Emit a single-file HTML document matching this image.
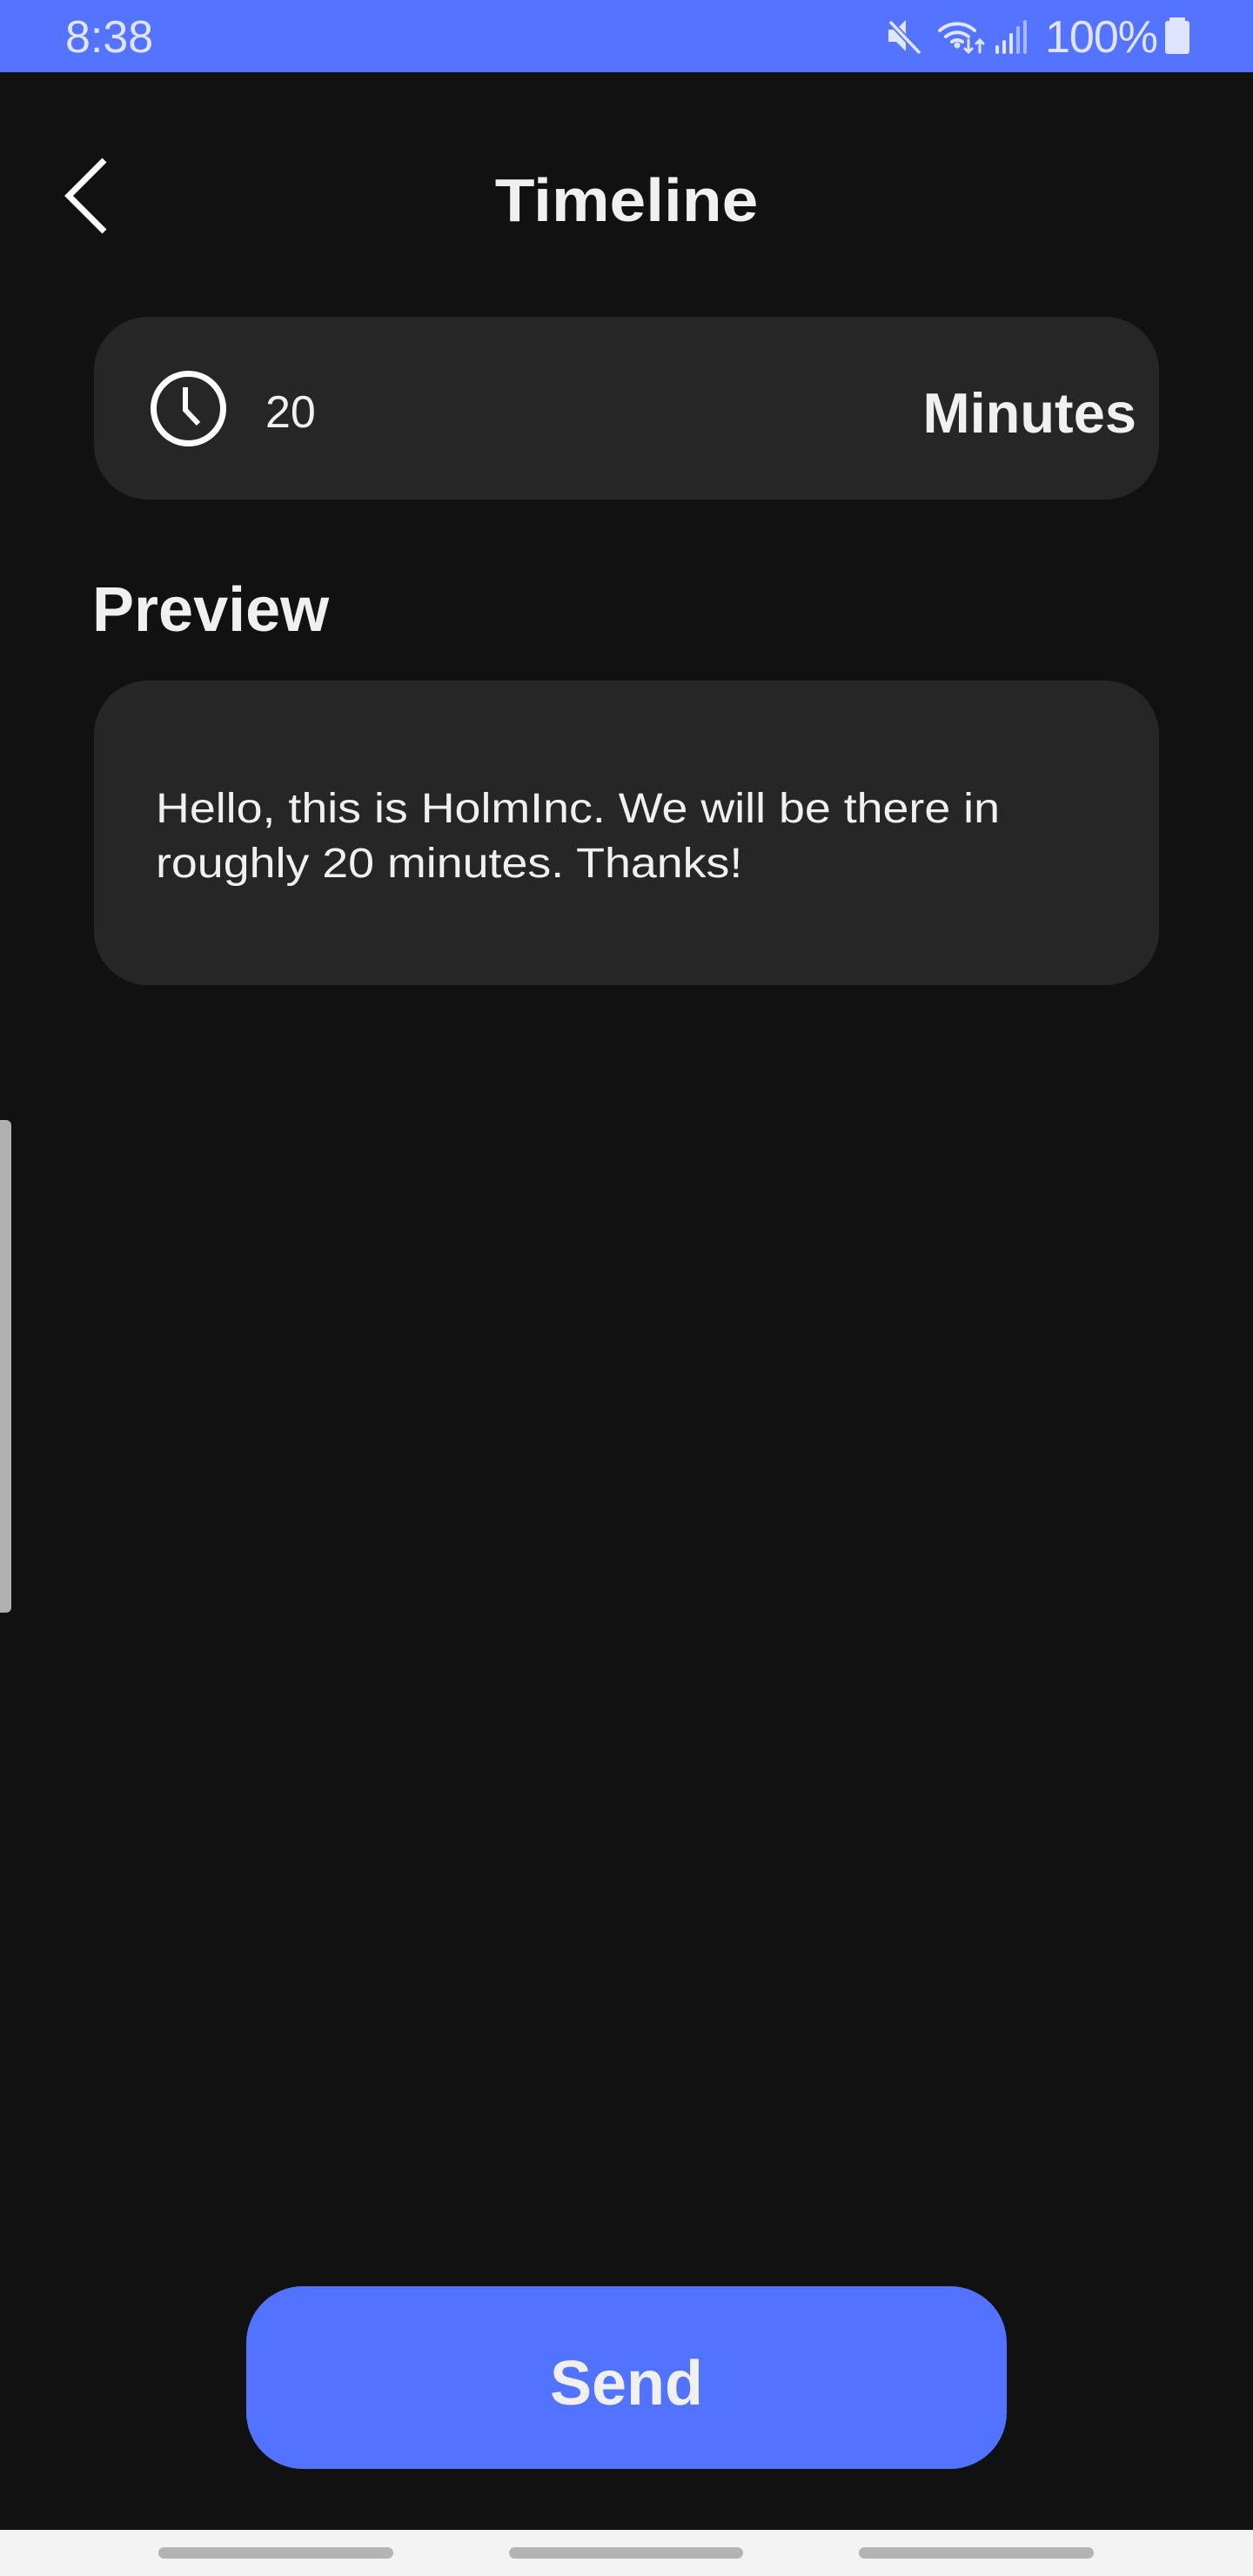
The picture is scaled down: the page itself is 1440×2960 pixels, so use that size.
<!DOCTYPE html>
<html><head><meta charset="utf-8"><style>
*{margin:0;padding:0;box-sizing:border-box}
body{width:1440px;height:2960px;background:#111111;position:relative;overflow:hidden;font-family:"Liberation Sans",sans-serif;color:#f0f0f0}
.a{position:absolute;white-space:nowrap;line-height:1}
</style></head><body>
<div class="a" style="left:0;top:0;width:1440px;height:83px;background:#5473ff"></div>
<div class="a" style="left:75px;top:17px;font-size:52px;color:#dfe4ff">8:38</div>
<svg class="a" style="left:1015px;top:18px" width="360" height="46" viewBox="1015 18 360 46">
 <g fill="#dfe4ff">
  <path d="M1021 34h9l11-11v36l-11-11h-9z"/>
  <path d="M1022 24l34 36" stroke="#5473ff" stroke-width="7"/>
  <path d="M1023 25l34 36" stroke="#dfe4ff" stroke-width="3.5"/>
  <circle cx="1100" cy="52" r="3.5"/>
  <rect x="1144" y="52" width="4" height="10" rx="2"/>
  <rect x="1152" y="46" width="4" height="16" rx="2"/>
  <rect x="1160" y="38" width="4" height="24" rx="2"/>
  <rect x="1168" y="30" width="4" height="32" rx="2" opacity=".6"/>
  <rect x="1176" y="23" width="4" height="39" rx="2" opacity=".6"/>
  <rect x="1344" y="20" width="18" height="5" rx="1"/>
  <rect x="1339" y="24" width="28" height="38" rx="3"/>
 </g>
 <g fill="none" stroke="#dfe4ff" stroke-width="4" stroke-linecap="round">
  <path d="M1080 35a30 30 0 0 1 40 0"/>
  <path d="M1087 42a20 20 0 0 1 26 0"/>
  <path d="M1094 48a10 10 0 0 1 12 0"/>
  <path d="M1113 46v14M1109 56l4 4 4-4" stroke-width="3"/>
  <path d="M1126 60v-14M1122 50l4-4 4 4" stroke-width="3"/>
 </g>
</svg>
<div class="a" style="left:1201px;top:17px;font-size:52px;color:#dfe4ff;letter-spacing:-1px">100%</div>

<svg class="a" style="left:70px;top:180px" width="56" height="90" viewBox="0 0 56 90"><path d="M50 4L9 45l41 41" fill="none" stroke="#fff" stroke-width="7"/></svg>
<div class="a" style="left:0;width:1440px;text-align:center;top:195px;font-size:70px;font-weight:bold;transform:scaleX(1.07)">Timeline</div>

<div class="a" style="left:108px;top:364px;width:1224px;height:210px;background:#262626;border-radius:62px"></div>
<svg class="a" style="left:170px;top:423px" width="93" height="93" viewBox="0 0 93 93"><circle cx="46.5" cy="46.5" r="40" fill="none" stroke="#fff" stroke-width="7"/><path d="M43 22v26l15 16" fill="none" stroke="#fff" stroke-width="6"/></svg>
<div class="a" style="left:305px;top:448px;font-size:52px">20</div>
<div class="a" style="right:134px;top:442px;font-size:65px;font-weight:bold">Minutes</div>

<div class="a" style="left:106px;top:665px;font-size:72px;font-weight:bold">Preview</div>
<div class="a" style="left:108px;top:782px;width:1224px;height:350px;background:#262626;border-radius:62px"></div>
<div class="a" style="left:179px;top:898px;font-size:48px;line-height:63px;transform:scaleX(1.12);transform-origin:0 0">Hello, this is HolmInc. We will be there in<br>roughly 20 minutes. Thanks!</div>

<div class="a" style="left:0;top:1287px;width:13px;height:566px;background:#b0b0b0;border-radius:0 6px 6px 0"></div>

<div class="a" style="left:283px;top:2627px;width:874px;height:210px;background:#5273ff;border-radius:65px"></div>
<div class="a" style="left:0;width:1440px;text-align:center;top:2703px;font-size:72px;font-weight:bold">Send</div>

<div class="a" style="left:0;top:2907px;width:1440px;height:53px;background:#f3f3f3"></div>
<div class="a" style="left:182px;top:2927px;width:270px;height:13px;background:#b4b4b4;border-radius:7px"></div>
<div class="a" style="left:585px;top:2927px;width:269px;height:13px;background:#b4b4b4;border-radius:7px"></div>
<div class="a" style="left:987px;top:2927px;width:270px;height:13px;background:#b4b4b4;border-radius:7px"></div>
</body></html>
